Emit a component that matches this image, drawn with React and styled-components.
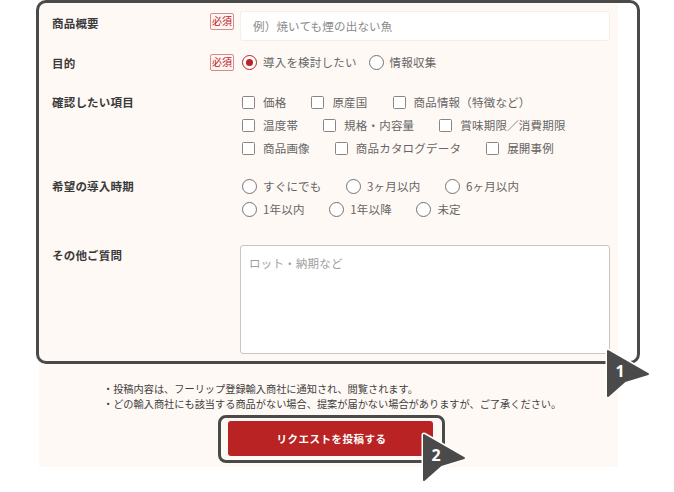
import React from 'react';
import styled, { createGlobalStyle } from 'styled-components';

const GlobalStyle = createGlobalStyle`
  html, body {
    margin: 0;
    padding: 0;
    background: #fff;
  }
  body {
    width: 674px;
    height: 492px;
    overflow: hidden;
    font-family: "Noto Sans CJK JP", "Noto Sans", sans-serif;
  }
`;

const Page = styled.div`
  position: relative;
  width: 674px;
  height: 492px;
  padding-left: 39px;
  box-sizing: border-box;
`;

const Panel = styled.div`
  width: 579px;
  height: 467px;
  background: #fff9f5;
  padding: 11px 8px 0 13px;
  box-sizing: border-box;
`;

const Row = styled.div`
  display: grid;
  grid-template-columns: 158px 30px 1fr;
  min-height: ${props => props.height}px;
`;

const Label = styled.div`
  font-size: 11.5px;
  font-weight: 700;
  line-height: 16px;
  letter-spacing: .2px;
  color: #3a3a3a;
  padding-top: ${props => props.top || 0}px;
`;

const Required = styled.span`
  width: 24px;
  height: 17px;
  margin-top: ${props => props.top || 0}px;
  box-sizing: border-box;
  border: 1px solid #d98a8a;
  border-radius: 2px;
  background: #fff5f3;
  color: #b92323;
  font-size: 10px;
  font-weight: 400;
  line-height: 14px;
  text-align: center;
  white-space: nowrap;
`;

const TextInput = styled.div`
  width: 370px;
  height: 30px;
  box-sizing: border-box;
  background: #fff;
  border: 1px solid #f3eeea;
  border-radius: 3px;
  padding: 0 12px;
  font-size: 11.5px;
  line-height: 28px;
  letter-spacing: .2px;
  color: #8a8a8a;
`;

const TextArea = styled.div`
  width: 370px;
  height: 109px;
  box-sizing: border-box;
  background: #fff;
  border: 1px solid #c9c5c2;
  border-radius: 3px;
  padding: 8px;
  font-size: 11.5px;
  line-height: 18px;
  letter-spacing: .2px;
  color: #a0a0a0;
`;

const Options = styled.div`
  display: flex;
  flex-direction: column;
  gap: 5px;
  padding-top: ${props => props.top || 0}px;
`;

const OptionLine = styled.div`
  display: flex;
  height: 18px;
  align-items: center;
  gap: ${props => props.gap}px;
  padding-left: 2px;
`;

const Option = styled.span`
  display: inline-flex;
  align-items: center;
  gap: 6px;
  font-size: 11.5px;
  line-height: 18px;
  letter-spacing: .2px;
  color: #666;
  white-space: nowrap;
`;

const CheckBox = styled.i`
  width: 13px;
  height: 13px;
  box-sizing: border-box;
  margin-right: 2px;
  border: 1.5px solid #8a8582;
  border-radius: 1.5px;
  background: #fff;
  flex: none;
`;

const RadioDot = styled.i`
  width: 15px;
  height: 15px;
  box-sizing: border-box;
  border: 1.5px solid ${props => props.checked ? '#b92323' : '#77726f'};
  border-radius: 50%;
  background: #fff;
  flex: none;
  display: flex;
  align-items: center;
  justify-content: center;
  &::after {
    content: '';
    display: ${props => props.checked ? 'block' : 'none'};
    width: 7px;
    height: 7px;
    border-radius: 50%;
    background: #b92323;
  }
`;

const Notes = styled.ul`
  list-style: none;
  margin: 0;
  padding: 0;
  position: absolute;
  top: 381px;
  left: 103px;
  font-size: 10.2px;
  line-height: 15px;
  color: #3f3f3f;
  white-space: nowrap;
`;

const SubmitButton = styled.button`
  position: absolute;
  left: 228px;
  top: 421px;
  width: 205px;
  height: 35px;
  padding: 0 0 0 2px;
  border: none;
  border-radius: 3px;
  background: #b92323;
  color: #fff;
  font-family: inherit;
  font-size: 10.5px;
  font-weight: 700;
  letter-spacing: .5px;
`;

const Highlight = styled.div`
  position: absolute;
  box-sizing: border-box;
  border: 3px solid #4a4a4a;
  border-radius: ${props => props.radius}px;
  left: ${props => props.left}px;
  top: ${props => props.top}px;
  width: ${props => props.width}px;
  height: ${props => props.height}px;
  pointer-events: none;
`;

const MarkerWrap = styled.div`
  position: absolute;
  left: ${props => props.left}px;
  top: ${props => props.top}px;
  width: 50px;
  height: 54px;
`;

const MarkerNumber = styled.span`
  position: absolute;
  left: 9px;
  top: 13px;
  width: 14px;
  text-align: center;
  font-family: "Noto Sans", sans-serif;
  font-size: 16px;
  font-weight: 700;
  line-height: 22px;
  color: #fff;
`;

const arrow = 'M4 4 L44 27 L21 34 L4 49 Z';

const Marker = ({ left, top, n }) => (
  <MarkerWrap left={left} top={top}>
    <svg width="50" height="54" viewBox="0 0 50 54">
      <path d={arrow} fill="#fff" stroke="#fff" strokeWidth="5" strokeLinejoin="round" />
      <path d={arrow} fill="#4a4a4a" stroke="#4a4a4a" strokeWidth="2" strokeLinejoin="round" />
    </svg>
    <MarkerNumber>{n}</MarkerNumber>
  </MarkerWrap>
);

const checkLines = [
  ['価格', '原産国', '商品情報（特徴など）'],
  ['温度帯', '規格・内容量', '賞味期限／消費期限'],
  ['商品画像', '商品カタログデータ', '展開事例'],
];

const timeLines = [
  ['すぐにでも', '3ヶ月以内', '6ヶ月以内'],
  ['1年以内', '1年以降', '未定'],
];

const App = () => (
  <>
    <GlobalStyle />
    <Page>
      <Panel>
        <Row height={38}>
          <Label top={4}>商品概要</Label>
          <Required top={2}>必須</Required>
          <TextInput>例）焼いても煙の出ない魚</TextInput>
        </Row>
        <Row height={44}>
          <Label top={6}>目的</Label>
          <Required top={5}>必須</Required>
          <Options top={4}>
            <OptionLine gap={12}>
              <Option><RadioDot checked />導入を検討したい</Option>
              <Option><RadioDot />情報収集</Option>
            </OptionLine>
          </Options>
        </Row>
        <Row height={84}>
          <Label top={1}>確認したい項目</Label>
          <span />
          <Options>
            {checkLines.map(line => (
              <OptionLine key={line[0]} gap={25}>
                {line.map(item => <Option key={item}><CheckBox />{item}</Option>)}
              </OptionLine>
            ))}
          </Options>
        </Row>
        <Row height={68}>
          <Label top={1}>希望の導入時期</Label>
          <span />
          <Options>
            {timeLines.map(line => (
              <OptionLine key={line[0]} gap={24.5}>
                {line.map(item => <Option key={item}><RadioDot />{item}</Option>)}
              </OptionLine>
            ))}
          </Options>
        </Row>
        <Row height={110}>
          <Label top={2}>その他ご質問</Label>
          <span />
          <TextArea>ロット・納期など</TextArea>
        </Row>
      </Panel>
      <Notes>
        <li>・投稿内容は、フーリップ登録輸入商社に通知され、閲覧されます。</li>
        <li>・どの輸入商社にも該当する商品がない場合、提案が届かない場合がありますが、ご了承ください。</li>
      </Notes>
      <SubmitButton>リクエストを投稿する</SubmitButton>
      <Highlight left={36} top={0} width={604} height={364} radius={10} />
      <Highlight left={218} top={415} width={227} height={48} radius={8} />
      <Marker left={604} top={347} n={1} />
      <Marker left={420} top={431} n={2} />
    </Page>
  </>
);

export default App;
